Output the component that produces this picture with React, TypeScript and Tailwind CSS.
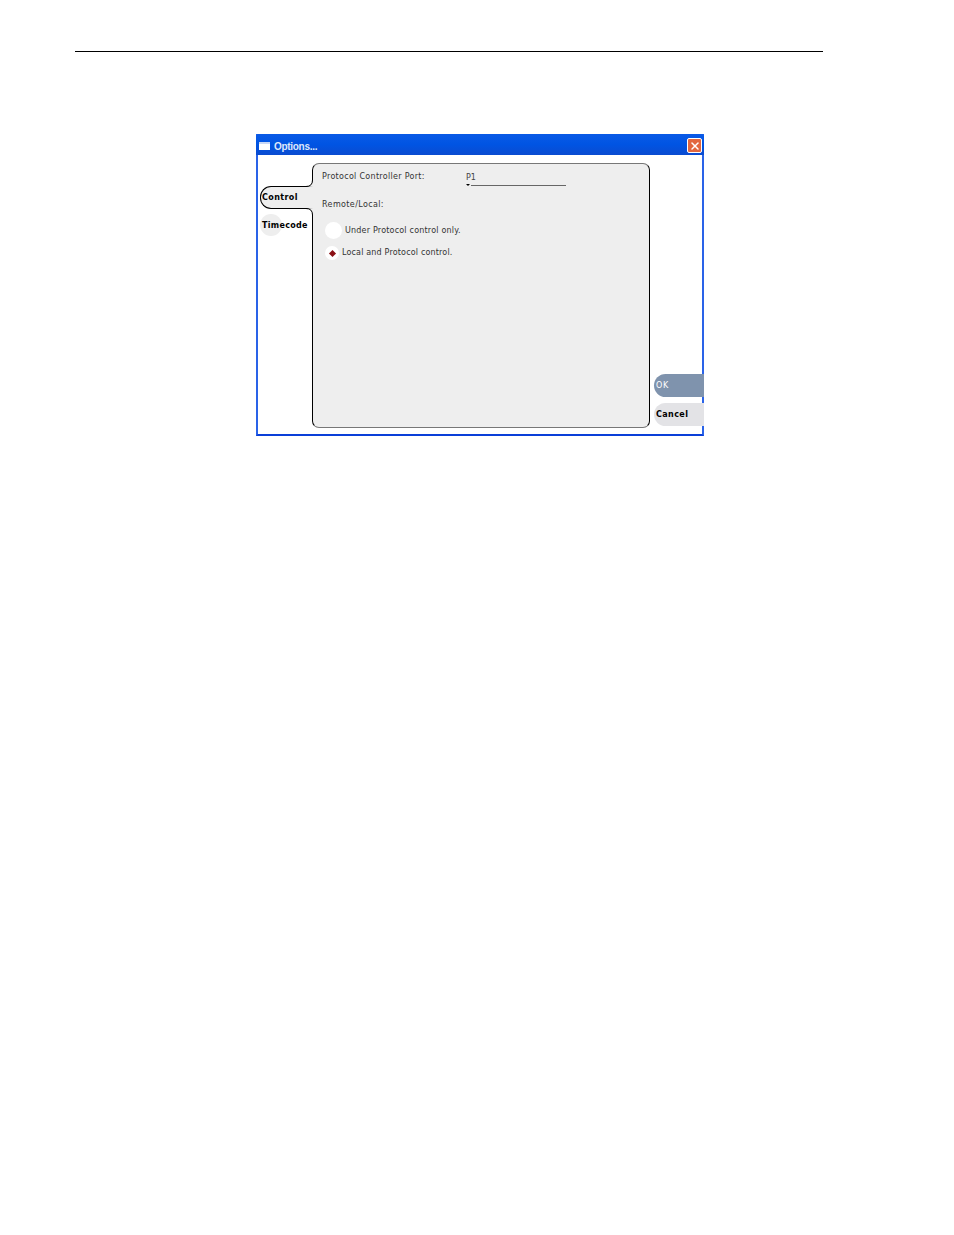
import { X } from "lucide-react";

export default function App() {
  return (
    <div className="w-[954px] h-[1235px] bg-white overflow-hidden pt-[51px] font-['DejaVu_Sans',sans-serif] text-[8px] text-[#333]">
      {/* page rule */}
      <div className="ml-[75px] w-[748px] h-px bg-black" />

      {/* dialog window */}
      <div className="ml-[256px] mt-[82px] w-[448px] h-[302px] flex flex-col bg-white border-x-2 border-b-2 border-x-[#2a63e8] border-b-[#0a3fd8]">
        <div className="-mx-0.5 h-[21px] flex items-center justify-between pt-[2px] pl-[3px] pr-0.5 rounded-t-[2px] bg-gradient-to-b from-[#0a5ae6] via-[#0054e3] to-[#0a4bd0]">
          <div className="flex items-center gap-1">
            <div className="w-[11px] h-[8px] bg-white border-t-2 border-[#c9d8f5]" />
            <span className="pt-[2px] font-['Liberation_Sans',sans-serif] font-bold text-[10px] tracking-[-0.3px] text-[#dfe8fa]">Options...</span>
          </div>
          <div className="w-[15px] h-[15px] flex items-center justify-center rounded-[2px] border border-white bg-[#e2673f]">
            <X className="w-3 h-3 text-white" strokeWidth={3} />
          </div>
        </div>

        <div className="flex-1 flex min-h-0">
          {/* tabs */}
          <div className="w-[52px] ml-[2px] pt-[31px] flex flex-col font-bold text-black relative z-10">
            <div className="relative h-[23px] -mr-px flex items-center pl-[1px] bg-[#eeeeee] border border-r-0 border-black rounded-l-[11px] tracking-[0.4px]">
              Control
              <svg className="absolute right-0 -top-[7px] w-[7px] h-[7px]" viewBox="0 0 7 7">
                <path d="M6.5 0 Q6.5 6.5 0 6.5 L7 7 L7 0 Z" fill="#eeeeee" />
                <path d="M6.5 0 Q6.5 6.5 0 6.5" fill="none" stroke="black" strokeWidth="1" />
              </svg>
              <svg className="absolute right-0 -bottom-[7px] w-[7px] h-[7px]" viewBox="0 0 7 7">
                <path d="M6.5 7 Q6.5 0.5 0 0.5 L7 0 L7 7 Z" fill="#eeeeee" />
                <path d="M6.5 7 Q6.5 0.5 0 0.5" fill="none" stroke="black" strokeWidth="1" />
              </svg>
            </div>
            <div className="relative h-[33px] flex items-center pl-[2px] tracking-[0.3px]">
              <div className="absolute left-0 top-[5px] w-[22px] h-[22px] rounded-full bg-[#eeeeee]" />
              <span className="relative">Timecode</span>
            </div>
          </div>

          {/* panel */}
          <div className="mt-2 mb-[6px] w-[338px] bg-[#eeeeee] border-x border-black border-t border-t-[#777] border-b border-b-[#777] rounded-[7px] pl-[9px] pt-[7px]">
            <div className="flex h-[13px] items-start">
              <span className="w-[144px] tracking-[0.3px]">Protocol Controller Port:</span>
              <div className="w-[100px]">
                <div className="leading-[10px] mt-[2px] text-[#444]">P1</div>
                <div className="flex items-center gap-px mt-[1px]">
                  <div className="w-0 h-0 border-x-[2px] border-x-transparent border-t-[2px] border-t-black" />
                  <div className="flex-1 h-px bg-[#666]" />
                </div>
              </div>
            </div>
            <div className="mt-[16px] leading-[10px] tracking-[0.38px]">Remote/Local:</div>

            <div className="mt-[12px] ml-[3px] flex items-center tracking-[0.2px]">
              <div className="w-[17px] h-[17px] rounded-full bg-white" />
              <span className="ml-[3px]">Under Protocol control only.</span>
            </div>
            <div className="mt-[7px] ml-[3px] flex items-center tracking-[0.17px]">
              <div className="w-[14px] h-[14px] rounded-full bg-white flex items-center justify-center">
                <div className="w-[5px] h-[5px] rotate-45 bg-[#8a0f14]" />
              </div>
              <span className="ml-[3px]">Local and Protocol control.</span>
            </div>
          </div>

          {/* side buttons */}
          <div className="flex-1 pl-1 -mr-0.5 pt-[219px] flex flex-col gap-[6px] min-w-0">
            <div className="h-[23px] flex items-center pl-[2px] rounded-l-[12px] bg-[#7f93ad] text-white tracking-[0.8px]">OK</div>
            <div className="h-[23px] flex items-center pl-[2px] rounded-l-[12px] bg-[#e3e3e6] font-bold text-black tracking-[0.4px]">Cancel</div>
          </div>
        </div>
      </div>
    </div>
  );
}
